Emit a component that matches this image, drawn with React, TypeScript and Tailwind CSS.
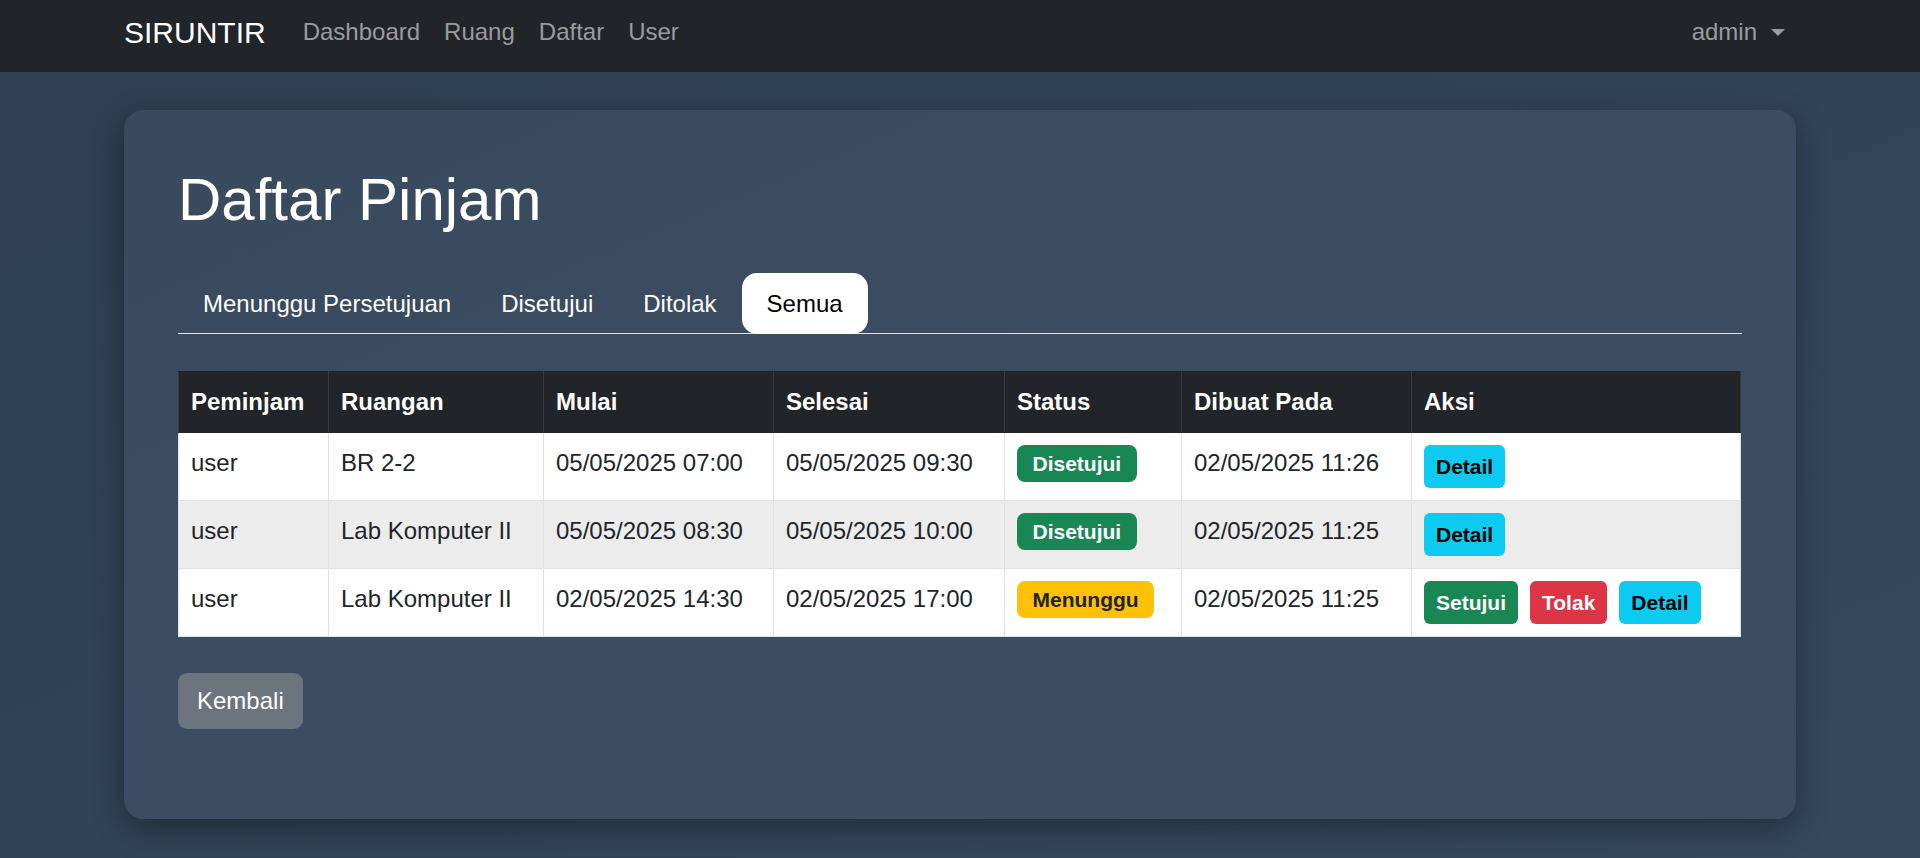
import React from "react";

type Row = {
  peminjam: string;
  ruangan: string;
  mulai: string;
  selesai: string;
  status: "Disetujui" | "Menunggu";
  dibuat: string;
};

const rows: Row[] = [
  { peminjam: "user", ruangan: "BR 2-2", mulai: "05/05/2025 07:00", selesai: "05/05/2025 09:30", status: "Disetujui", dibuat: "02/05/2025 11:26" },
  { peminjam: "user", ruangan: "Lab Komputer II", mulai: "05/05/2025 08:30", selesai: "05/05/2025 10:00", status: "Disetujui", dibuat: "02/05/2025 11:25" },
  { peminjam: "user", ruangan: "Lab Komputer II", mulai: "02/05/2025 14:30", selesai: "02/05/2025 17:00", status: "Menunggu", dibuat: "02/05/2025 11:25" },
];

const tabs = ["Menunggu Persetujuan", "Disetujui", "Ditolak", "Semua"];
const headers = ["Peminjam", "Ruangan", "Mulai", "Selesai", "Status", "Dibuat Pada", "Aksi"];
const widths = ["w-[150px]", "w-[215px]", "w-[230px]", "w-[231px]", "w-[177px]", "w-[230px]", "w-[329px]"];

function Navbar() {
  return (
    <nav className="h-[72px] bg-[#212529] px-[124px] flex items-start justify-between">
      <div className="flex items-start">
        <a className="mt-[10px] text-[30px] leading-[45px] text-white mr-[25px]">SIRUNTIR</a>
        {["Dashboard", "Ruang", "Daftar", "User"].map((l) => (
          <a key={l} className="mt-[13.5px] px-[12px] text-[24px] leading-[36px] text-[#9a9c9f]">
            {l}
          </a>
        ))}
      </div>
      <a className="mt-[13.5px] pl-[12px] pr-[11px] flex items-center text-[24px] leading-[36px] text-[#9a9c9f]">
        admin
        <span className="ml-[14px] mt-[1px] inline-block w-0 h-0 border-t-[7px] border-x-[7px] border-x-transparent border-t-[#9a9c9f]" />
      </a>
    </nav>
  );
}

function Badge({ status }: { status: Row["status"] }) {
  const cls =
    status === "Disetujui" ? "bg-[#198754] text-white" : "bg-[#ffc107] text-[#212529]";
  return (
    <span className={`inline-flex items-center h-[37px] px-[15.5px] rounded-[8px] text-[21px] font-bold leading-none ${cls}`}>
      {status}
    </span>
  );
}

function Btn({ label, cls }: { label: string; cls: string }) {
  return (
    <button className={`h-[43px] px-[12px] rounded-[6px] text-[21px] font-bold leading-[31.5px] ${cls}`}>
      {label}
    </button>
  );
}

export default function App() {
  return (
    <div
      className="min-h-screen bg-gradient-to-br from-[#2c3e50] to-[#34495e]"
      style={{ fontFamily: '"Liberation Sans", Arial, sans-serif' }}
    >
      <Navbar />
      <div className="px-[124px] pt-[38px] pb-[40px]">
        <div className="rounded-[20px] bg-gradient-to-br from-[#3a4a5d] via-[#3c4c62] to-[#3c4d61] shadow-[0_10px_30px_rgba(0,0,0,0.35)] px-[54px] pt-[54px] pb-[90px]">
          <h1 className="text-[60px] leading-[72px] text-white mb-[37px]">Daftar Pinjam</h1>

          <div className="flex border-b border-[#dee2e6]">
            {tabs.map((t) => {
              const active = t === "Semua";
              return (
                <div
                  key={t}
                  className={`h-[61px] -mb-px px-[25px] flex items-center text-[24px] leading-[36px] rounded-[15px] ${
                    active ? "bg-white text-black" : "text-white"
                  }`}
                >
                  {t}
                </div>
              );
            })}
          </div>

          <table className="mt-[37px] w-[1562px] table-fixed border-collapse text-[24px] leading-[36px]">
            <colgroup>
              {widths.map((w, i) => (
                <col key={i} className={w} />
              ))}
            </colgroup>
            <thead>
              <tr className="bg-[#212529]">
                {headers.map((h) => (
                  <th
                    key={h}
                    className="text-left font-bold text-white px-[12px] py-[12px] border border-[#212529] border-x-[#373b3e]"
                  >
                    {h}
                  </th>
                ))}
              </tr>
            </thead>
            <tbody className="text-[#212529]">
              {rows.map((r, i) => (
                <tr key={i} className={i === 1 ? "bg-[#ececec]" : "bg-white"}>
                  <td className="align-top px-[12px] py-[12px] border border-[#dee2e6]">{r.peminjam}</td>
                  <td className="align-top px-[12px] py-[12px] border border-[#dee2e6]">{r.ruangan}</td>
                  <td className="align-top px-[12px] py-[12px] border border-[#dee2e6]">{r.mulai}</td>
                  <td className="align-top px-[12px] py-[12px] border border-[#dee2e6]">{r.selesai}</td>
                  <td className="align-top px-[12px] py-[12px] border border-[#dee2e6]">
                    <div className="flex">
                      <Badge status={r.status} />
                    </div>
                  </td>
                  <td className="align-top px-[12px] py-[12px] border border-[#dee2e6]">{r.dibuat}</td>
                  <td className="align-top px-[12px] py-[12px] border border-[#dee2e6]">
                    <div className="flex gap-[12px]">
                      {r.status === "Menunggu" && (
                        <>
                          <Btn label="Setujui" cls="bg-[#198754] text-white" />
                          <Btn label="Tolak" cls="bg-[#dc3545] text-white" />
                        </>
                      )}
                      <Btn label="Detail" cls="bg-[#0dcaf0] text-black" />
                    </div>
                  </td>
                </tr>
              ))}
            </tbody>
          </table>

          <button className="mt-[36px] h-[56px] px-[19px] rounded-[9px] bg-[#6c757d] text-white text-[24px] leading-[36px]">
            Kembali
          </button>
        </div>
      </div>
    </div>
  );
}
